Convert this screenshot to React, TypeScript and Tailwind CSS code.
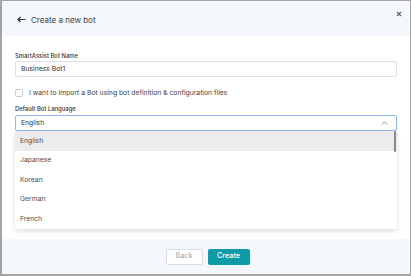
import React from "react";

const languages = ["English", "Japanese", "Korean", "German", "French"];

const App: React.FC = () => {
  return (
    <div
      className="w-[411px] h-[276px] bg-white border-[#a3a3a3] border-t border-l-2 border-r border-b-2 flex flex-col text-[#333]"
      style={{ fontFamily: "Inter, 'Noto Sans', sans-serif" }}
    >
      {/* Header */}
      <div className="h-[35px] shrink-0 bg-[#f4f7fb] flex items-center pl-[15px] pr-[8px]">
        <svg width="9" height="7" viewBox="0 0 9 7" className="mr-[5px] mt-[2px]">
          <path d="M8.5 3.5H1.2M3.6 1L1 3.5 3.6 6" fill="none" stroke="#333" strokeWidth="1.2" />
        </svg>
        <span className="text-[8px] leading-[10px] text-[#444] mt-[2px]">Create a new bot</span>
        <svg width="6" height="6" viewBox="0 0 6 6" className="ml-auto -mt-[9px]">
          <path d="M1 1l4 4M5 1L1 5" stroke="#5a6270" strokeWidth="1.1" />
        </svg>
      </div>

      {/* Body */}
      <div className="flex-1 relative px-[13px] pt-[16px]">
        <div className="text-[5.9px] font-medium text-[#333] leading-[8px]">SmartAssist Bot Name</div>
        <div className="mt-[1px] h-[16px] border border-[#dcdfe4] rounded-[2px] flex items-center px-[5px] text-[6.8px] text-[#333]">
          Business Bot1
        </div>

        <div className="mt-[12px] h-[8px] flex items-center">
          <div className="w-[8px] h-[8px] border border-[#c9cdd3] rounded-[2px] bg-white" />
          <span className="ml-[6px] text-[6.8px] leading-[8px] text-[#444]">
            I want to Import a Bot using bot definition &amp; configuration files
          </span>
        </div>

        <div className="mt-[8px] text-[5.9px] font-medium text-[#333] leading-[8px]">Default Bot Language</div>
        <div className="mt-[2px] h-[16px] border border-[#8fb8f3] rounded-[2px] flex items-center px-[5px] text-[6.8px] text-[#333]">
          English
          <svg width="7" height="4" viewBox="0 0 7 4" className="ml-auto mr-[3px]">
            <path d="M0.8 3.5L3.5 0.8l2.7 2.7" fill="none" stroke="#888" strokeWidth="0.9" />
          </svg>
        </div>

        {/* Dropdown menu */}
        <div className="absolute left-[13px] right-[13px] top-[95px] h-[98px] bg-white rounded-b-[3px] shadow-[0_2px_5px_rgba(0,0,0,0.14)] overflow-hidden">
          {languages.map((lang, i) => (
            <div
              key={lang}
              className={`h-[19.6px] flex items-center pl-[5px] text-[6.8px] text-[#4b4f56] ${i === 0 ? "bg-[#ececee]" : ""}`}
            >
              {lang}
            </div>
          ))}
          <div className="absolute right-[1px] top-0 w-[2.5px] h-[21px] bg-[#8a8a8a] rounded-[1px]" />
        </div>
      </div>

      {/* Footer */}
      <div className="h-[35px] shrink-0 bg-[#f4f7fb] flex items-center justify-center gap-[5px] pl-[3px]">
        <button className="w-[37px] h-[16px] bg-white border border-[#d9dce1] rounded-[2px] text-[7.3px] text-[#9aa0a6]">
          Back
        </button>
        <button className="w-[42px] h-[16px] bg-[#0f9aa7] rounded-[2px] text-[7.3px] text-white font-medium">
          Create
        </button>
      </div>
    </div>
  );
};

export default App;
